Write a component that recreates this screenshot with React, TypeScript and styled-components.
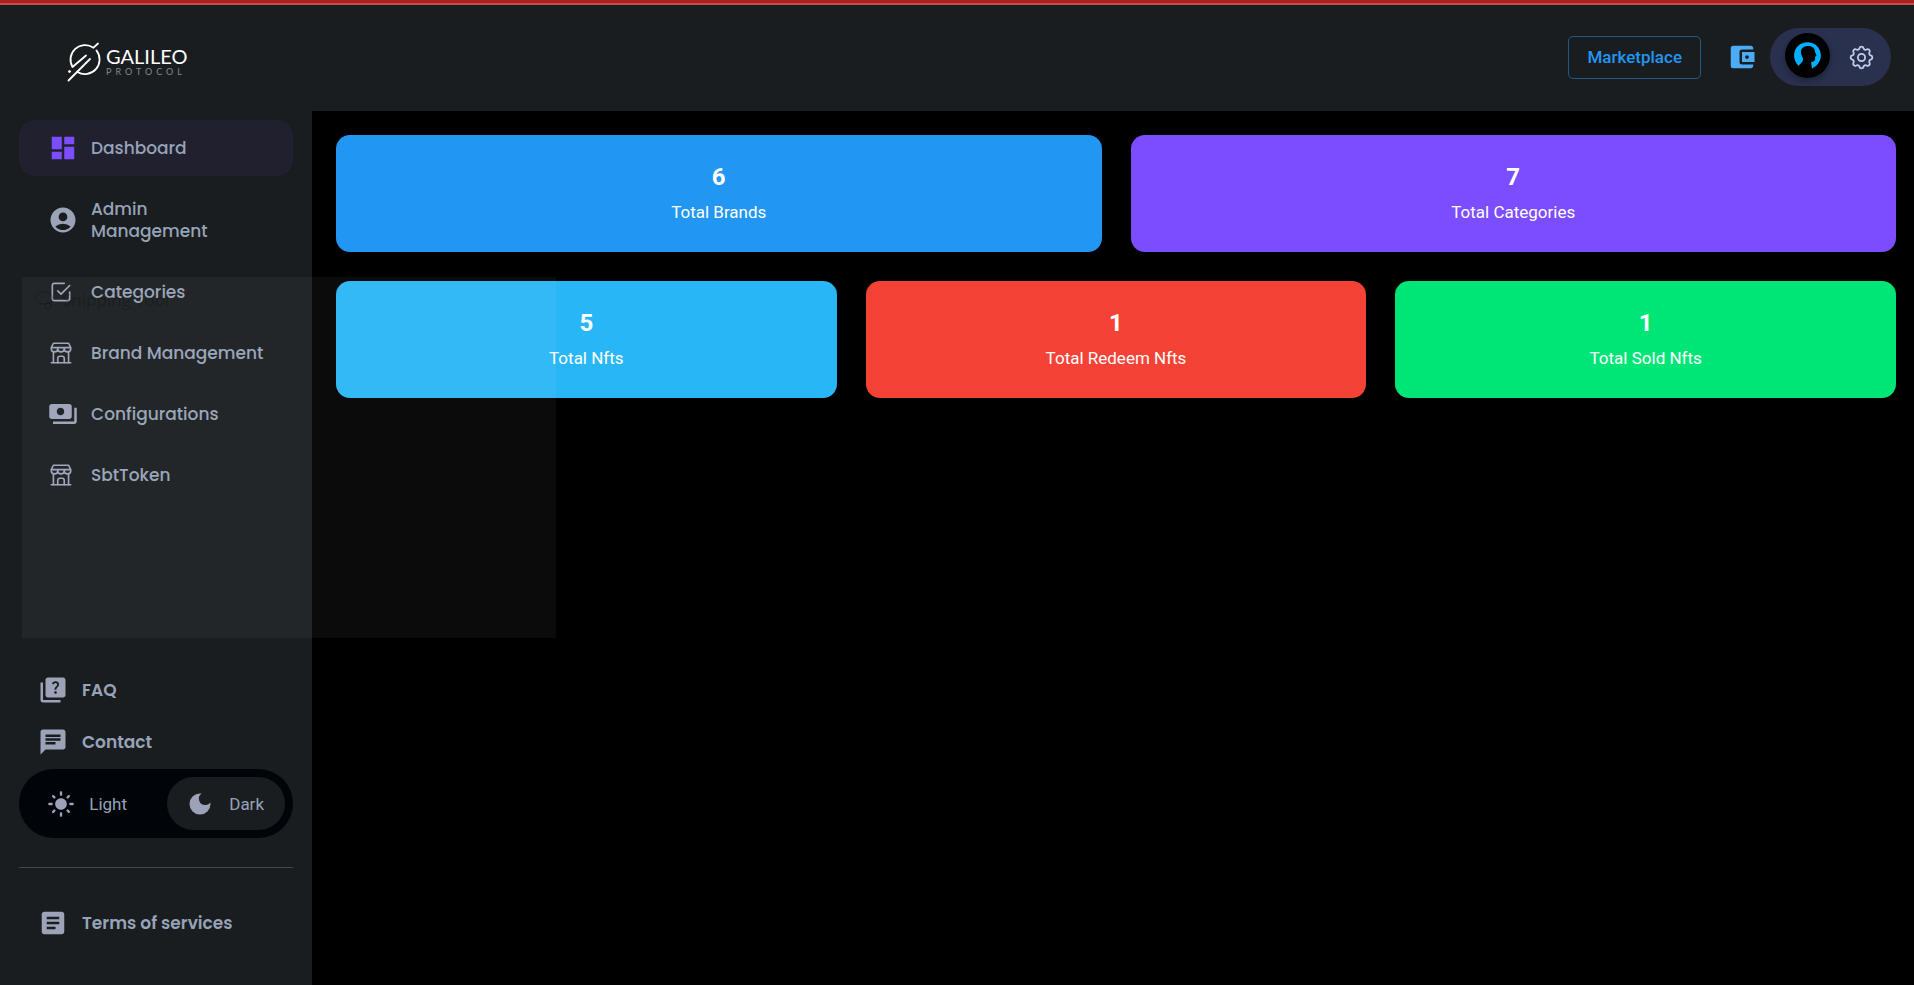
import React, { useState } from "react";
import styled, { createGlobalStyle } from "styled-components";
import {
  MdDashboard,
  MdAccountCircle,
  MdPayments,
  MdQuiz,
  MdChat,
  MdArticle,
  MdLightMode,
  MdDarkMode,
  MdAccountBalanceWallet,
} from "react-icons/md";
import { TbCheckbox, TbBuildingStore, TbSettings } from "react-icons/tb";

const colors = {
  surface: "#1a1d1f",
  page: "#000000",
  text: "#97a3b8",
  icon: "#9ca3b8",
  violet: "#7c4dff",
  blue: "#2196f3",
};

const GlobalStyle = createGlobalStyle`
  *, *::before, *::after { box-sizing: border-box; }
  body {
    margin: 0;
    background: ${colors.page};
    font-family: Roboto, "Liberation Sans", sans-serif;
  }
  button { font: inherit; cursor: pointer; }
`;

const Page = styled.div`
  position: relative;
  display: flex;
  flex-direction: column;
  min-height: 100vh;
`;

const ProgressStrip = styled.div`
  height: 5px;
  background: #ab1f1f;
  border-bottom: 2px solid #c05050;
`;

const Header = styled.header`
  display: flex;
  align-items: center;
  justify-content: space-between;
  height: 106px;
  padding: 0 23px 0 66px;
  background: ${colors.surface};
`;

const LogoLink = styled.a`
  display: flex;
  align-items: center;
  gap: 5px;
  margin-top: 8px;
  color: #ffffff;
  text-decoration: none;
`;

const LogoWords = styled.span`
  display: flex;
  flex-direction: column;
  font-family: Lato, sans-serif;
`;

const LogoName = styled.span`
  font-size: 20px;
  line-height: 20px;
`;

const LogoSub = styled.span`
  color: #85888a;
  font-size: 9px;
  font-weight: 400;
  line-height: 12px;
  letter-spacing: 4px;
`;

const HeaderActions = styled.div`
  display: flex;
  align-items: center;
  padding-bottom: 2px;
`;

const MarketplaceButton = styled.button`
  height: 43px;
  padding: 0 18px;
  border: 1px solid rgba(33, 150, 243, 0.5);
  border-radius: 5px;
  background: transparent;
  color: ${colors.blue};
  font-size: 17px;
  font-weight: 500;
`;

const WalletButton = styled.button`
  display: flex;
  margin: 0 13px 0 26px;
  padding: 0;
  border: 0;
  background: transparent;
  color: #4dabf5;
`;

const ProfileButton = styled.button`
  display: flex;
  align-items: center;
  justify-content: space-between;
  width: 121px;
  height: 58px;
  padding: 0 15px;
  border: 0;
  border-radius: 29px;
  background: #29314f;
  color: #c3cbef;
`;

const Avatar = styled.svg`
  margin-bottom: 4px;
  border-radius: 50%;
  box-shadow: 0 3px 6px rgba(0, 0, 0, 0.3);
`;

const Body = styled.div`
  display: flex;
  flex: 1;
`;

const Sidebar = styled.aside`
  display: flex;
  flex-direction: column;
  flex: 0 0 312px;
  padding: 9px 19px 36px;
  background: ${colors.surface};
`;

const Nav = styled.nav`
  display: flex;
  flex-direction: column;
  gap: 5px;
`;

const NavItem = styled.a<{ $active?: boolean }>`
  display: flex;
  align-items: center;
  padding: 17px 0 17px 29px;
  border-radius: 16px;
  background: ${(p) => (p.$active ? "#21202e" : "transparent")};
  color: ${colors.text};
  font-family: Poppins, Inter, sans-serif;
  font-size: 17px;
  font-weight: 500;
  line-height: 22px;
  white-space: pre-line;
  text-decoration: none;
`;

const NavIcon = styled.span<{ $active?: boolean }>`
  display: flex;
  align-items: center;
  flex: 0 0 43px;
  height: 22px;
  color: ${(p) => (p.$active ? colors.violet : colors.icon)};
`;

const SidebarFooter = styled.div`
  display: flex;
  flex-direction: column;
  margin-top: auto;
`;

const FooterLink = styled.a`
  display: flex;
  align-items: center;
  gap: 14px;
  height: 52px;
  padding-left: 19px;
  color: ${colors.text};
  font-family: Poppins, Inter, sans-serif;
  font-size: 17px;
  font-weight: 600;
  text-decoration: none;

  svg { color: ${colors.icon}; }
`;

const ThemeSwitch = styled.div`
  display: flex;
  gap: 4px;
  margin-top: 1px;
  padding: 8px;
  border-radius: 35px;
  background: #010409;
`;

const ThemeOption = styled.button<{ $active: boolean }>`
  display: flex;
  align-items: center;
  justify-content: space-between;
  flex: ${(p) => (p.$active ? "0 0 118px" : "1")};
  height: 53px;
  padding: ${(p) => (p.$active ? "0 21px 0 19px" : "0 36px 0 20px")};
  border: 0;
  border-radius: 27px;
  background: ${(p) => (p.$active ? colors.surface : "transparent")};
  color: ${colors.text};
  font-size: 17px;

  svg { color: ${colors.icon}; }
`;

const Divider = styled.hr`
  width: 100%;
  height: 1px;
  margin: 29px 0;
  border: 0;
  background: #43474a;
`;

const Main = styled.main`
  display: flex;
  flex-direction: column;
  flex: 1;
  gap: 29px;
  padding: 24px 18px 24px 24px;
`;

const CardRow = styled.section`
  display: flex;
  gap: 29px;
`;

const StatCard = styled.article<{ $color: string }>`
  display: flex;
  flex: 1;
  flex-direction: column;
  align-items: center;
  gap: 9px;
  padding: 28px;
  border-radius: 14px;
  background: ${(p) => p.$color};
  color: #ffffff;
`;

const StatValue = styled.strong`
  font-size: 24px;
  font-weight: 700;
  line-height: 28px;
`;

const StatLabel = styled.span`
  font-size: 17px;
  line-height: 24px;
`;

const GhostWindow = styled.div`
  position: absolute;
  top: 277px;
  left: 22px;
  width: 534px;
  height: 361px;
  padding: 11px 12px;
  background: rgba(255, 255, 255, 0.045);
  pointer-events: none;
`;

const GhostTitle = styled.div`
  display: flex;
  align-items: center;
  gap: 8px;
  color: rgba(0, 0, 0, 0.22);
  font-family: "Open Sans", sans-serif;
  font-size: 17px;
  line-height: 24px;
`;

function LogoMark() {
  return (
    <svg width="35" height="40" viewBox="0 0 35 40" fill="none" stroke="currentColor" strokeWidth="1.8" strokeLinecap="round" strokeLinejoin="round" aria-hidden="true">
      <path d="M32 1.500L27.500 5.700A14.600 14.600 0 0 0 6.500 25L20 13.500" />
      <path d="M11.500 30A14.600 14.600 0 0 0 30.500 8.500" />
      <path d="M2.500 38.500L24 17" />
      <circle cx="3.500" cy="29.500" r="1" fill="currentColor" strokeWidth="1" />
    </svg>
  );
}

function AvatarPicture() {
  return (
    <Avatar width="45" height="45" viewBox="0 0 45 45" aria-hidden="true">
      <rect width="45" height="45" fill="#000000" />
      <path
        d="M13.500 33C7 26 8.500 17 13 13C18 8 27 8 32 13C37 18 37.500 27 31.500 32.500L27 35.500L26 29C30 28.500 30.500 27 30 24L31.500 22.500L30 19C30 14.500 26.500 13 23 13C18 13 15.500 16 16 20C16.300 23 18.500 24.500 18 27C17.500 30 15 30.500 13.500 33Z"
        fill="#00b0ff"
      />
    </Avatar>
  );
}

const navItems = [
  { label: "Dashboard", icon: <MdDashboard size={30} />, active: true },
  { label: "Admin\nManagement", icon: <MdAccountCircle size={30} /> },
  { label: "Categories", icon: <TbCheckbox size={26} strokeWidth={1.5} /> },
  { label: "Brand Management", icon: <TbBuildingStore size={26} strokeWidth={1.5} /> },
  { label: "Configurations", icon: <MdPayments size={30} /> },
  { label: "SbtToken", icon: <TbBuildingStore size={26} strokeWidth={1.5} /> },
];

const statRows = [
  [
    { value: 6, label: "Total Brands", color: "#2196f3" },
    { value: 7, label: "Total Categories", color: "#7c4dff" },
  ],
  [
    { value: 5, label: "Total Nfts", color: "#29b6f6" },
    { value: 1, label: "Total Redeem Nfts", color: "#f44336" },
    { value: 1, label: "Total Sold Nfts", color: "#00e676" },
  ],
];

export default function App() {
  const [mode, setMode] = useState<"light" | "dark">("dark");

  return (
    <Page>
      <GlobalStyle />
      <ProgressStrip />
      <Header>
        <LogoLink href="#" aria-label="Galileo Protocol">
          <LogoMark />
          <LogoWords>
            <LogoName>GALILEO</LogoName>
            <LogoSub>PROTOCOL</LogoSub>
          </LogoWords>
        </LogoLink>
        <HeaderActions>
          <MarketplaceButton type="button">Marketplace</MarketplaceButton>
          <WalletButton type="button" aria-label="Wallet">
            <MdAccountBalanceWallet size={30} />
          </WalletButton>
          <ProfileButton type="button" aria-label="Account settings">
            <AvatarPicture />
            <TbSettings size={29} strokeWidth={1.5} />
          </ProfileButton>
        </HeaderActions>
      </Header>
      <Body>
        <Sidebar>
          <Nav>
            {navItems.map((item) => (
              <NavItem key={item.label} href="#" $active={item.active}>
                <NavIcon $active={item.active}>{item.icon}</NavIcon>
                {item.label}
              </NavItem>
            ))}
          </Nav>
          <SidebarFooter>
            <FooterLink href="#"><MdQuiz size={30} />FAQ</FooterLink>
            <FooterLink href="#"><MdChat size={30} />Contact</FooterLink>
            <ThemeSwitch role="group" aria-label="Theme">
              <ThemeOption type="button" $active={mode === "light"} onClick={() => setMode("light")}>
                <MdLightMode size={28} />Light
              </ThemeOption>
              <ThemeOption type="button" $active={mode === "dark"} onClick={() => setMode("dark")}>
                <MdDarkMode size={28} />Dark
              </ThemeOption>
            </ThemeSwitch>
            <Divider />
            <FooterLink href="#"><MdArticle size={30} />Terms of services</FooterLink>
          </SidebarFooter>
        </Sidebar>
        <Main>
          {statRows.map((row, index) => (
            <CardRow key={index}>
              {row.map((stat) => (
                <StatCard key={stat.label} $color={stat.color}>
                  <StatValue>{stat.value}</StatValue>
                  <StatLabel>{stat.label}</StatLabel>
                </StatCard>
              ))}
            </CardRow>
          ))}
        </Main>
      </Body>
      <GhostWindow aria-hidden="true">
        <GhostTitle>
          <svg width="20" height="20" viewBox="0 0 20 20" fill="none" stroke="currentColor">
            <ellipse cx="10" cy="8" rx="9" ry="6" />
            <circle cx="14" cy="16" r="3" />
          </svg>
          Snipping Tool
        </GhostTitle>
      </GhostWindow>
    </Page>
  );
}
